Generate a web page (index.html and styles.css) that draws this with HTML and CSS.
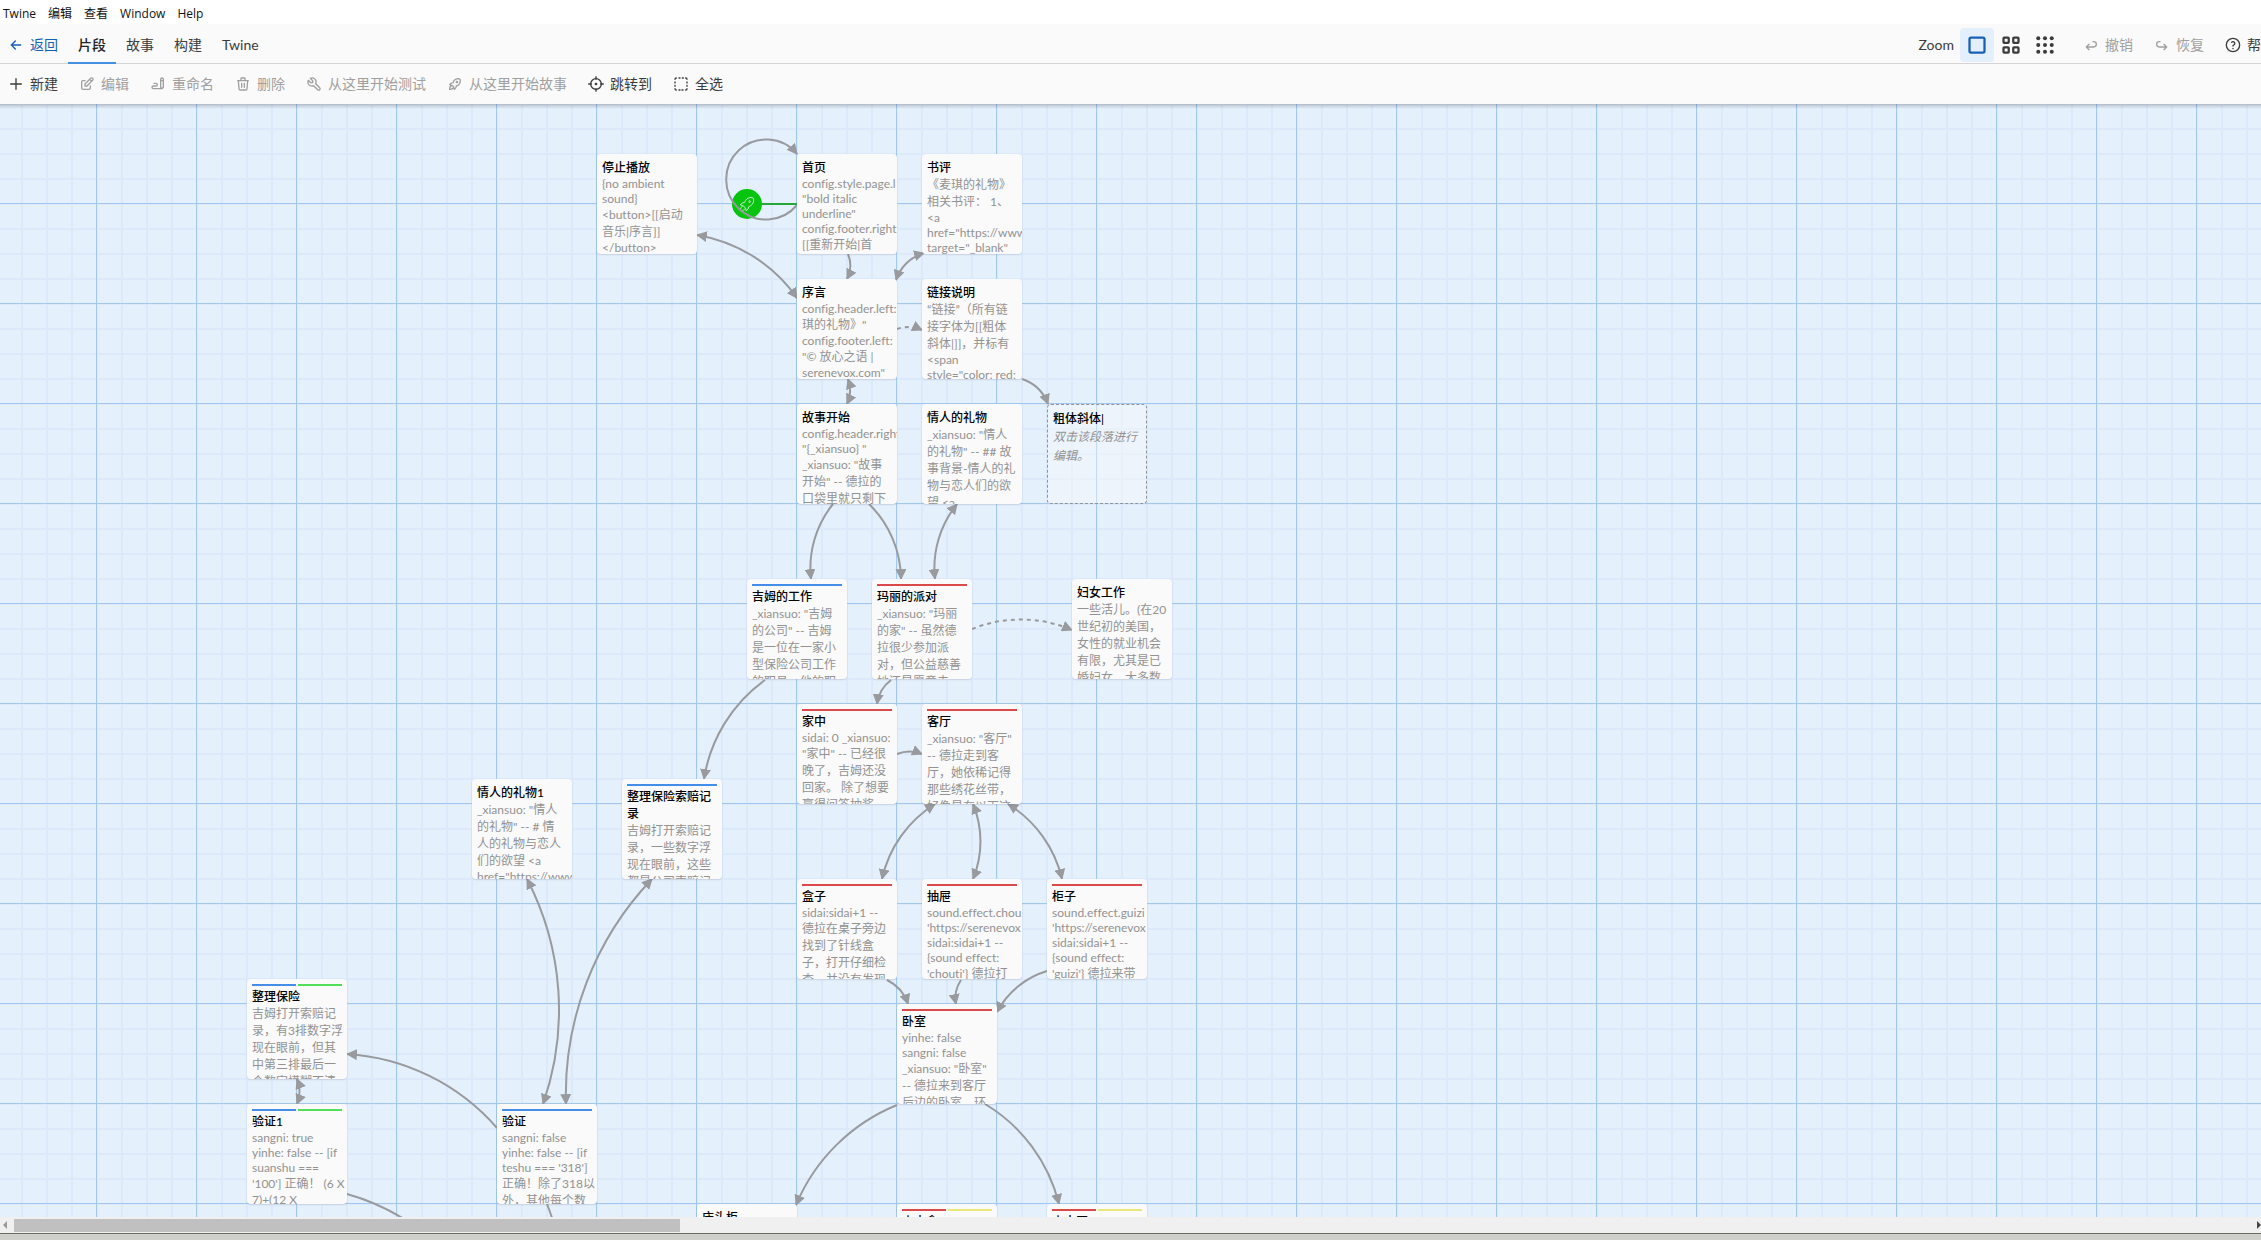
FILE: index.html
```
<!DOCTYPE html>
<html lang="zh-CN">
<head>
<meta charset="utf-8">
<title>Twine</title>
<link rel="stylesheet" href="styles.css">
</head>
<body>
<nav class="menubar" aria-label="Menu">
  <button>Twine</button><button>编辑</button><button>查看</button><button>Window</button><button>Help</button>
</nav>
<header class="top">
  <div class="tabs">
    <a class="tab back" href="#"><svg class="icon" viewBox="0 0 24 24"><path d="M5 12h14M5 12l6 6M5 12l6-6"/></svg>返回</a>
    <button class="tab active">片段</button>
    <button class="tab">故事</button>
    <button class="tab">构建</button>
    <button class="tab">Twine</button>
  </div>
  <div class="view">
    <span class="zoom-label">Zoom</span>
    <button class="zoom on" aria-label="Large"><svg viewBox="0 0 24 24"><rect x="2" y="2" width="20" height="20" rx="2"/></svg></button>
    <button class="zoom" aria-label="Medium"><svg viewBox="0 0 24 24"><rect x="2" y="2" width="7" height="7" rx="1"/><rect x="15" y="2" width="7" height="7" rx="1"/><rect x="2" y="15" width="7" height="7" rx="1"/><rect x="15" y="15" width="7" height="7" rx="1"/></svg></button>
    <button class="zoom dots" aria-label="Small"><svg viewBox="0 0 24 24"><circle cx="3" cy="3" r="2.7"/><circle cx="12" cy="3" r="2.7"/><circle cx="21" cy="3" r="2.7"/><circle cx="3" cy="12" r="2.7"/><circle cx="12" cy="12" r="2.7"/><circle cx="21" cy="12" r="2.7"/><circle cx="3" cy="21" r="2.7"/><circle cx="12" cy="21" r="2.7"/><circle cx="21" cy="21" r="2.7"/></svg></button>
    <div class="history">
      <button class="tool" disabled><svg class="icon" viewBox="0 0 24 24"><path d="M9 11l-4 4l4 4m-4-4h11a4 4 0 0 0 0-8h-1"/></svg>撤销</button>
      <button class="tool" disabled><svg class="icon" viewBox="0 0 24 24"><path d="M15 11l4 4l-4 4m4-4h-11a4 4 0 0 1 0-8h1"/></svg>恢复</button>
      <button class="tool"><svg class="icon" viewBox="0 0 24 24"><circle cx="12" cy="12" r="10"/><path d="M12 17v.5M12 13.5a1.5 1.5 0 0 1 1-1.500a2.600 2.600 0 1 0-3-4"/></svg>帮助</button>
    </div>
  </div>
</header>
<div class="toolbar">
  <button class="tool"><svg class="icon" viewBox="0 0 24 24"><path d="M12 4v16M4 12h16"/></svg>新建</button>
  <button class="tool" disabled><svg class="icon" viewBox="0 0 24 24"><path d="M9 7h-3a2 2 0 0 0-2 2v9a2 2 0 0 0 2 2h9a2 2 0 0 0 2-2v-3M9 15h3l8.500-8.500a1.500 1.500 0 0 0-3-3l-8.500 8.500v3M16 5l3 3"/></svg>编辑</button>
  <button class="tool" disabled><svg class="icon" viewBox="0 0 24 24"><path d="M20 17v-12a2 2 0 0 0-4 0v12l2 2l2-2zM16 7h4M18 19h-13a2 2 0 1 1 0-4h4a2 2 0 1 0 0-4h-3"/></svg>重命名</button>
  <button class="tool" disabled><svg class="icon" viewBox="0 0 24 24"><path d="M4 7h16M10 11v6M14 11v6M5 7l1 12a2 2 0 0 0 2 2h8a2 2 0 0 0 2-2l1-12M9 7v-3a1 1 0 0 1 1-1h4a1 1 0 0 1 1 1v3"/></svg>删除</button>
  <button class="tool" disabled><svg class="icon" viewBox="0 0 24 24"><path d="M7 10h3v-3l-3.500-3.500a6 6 0 0 1 8 8l6 6a2 2 0 0 1-3 3l-6-6a6 6 0 0 1-8-8l3.500 3.500"/></svg>从这里开始测试</button>
  <button class="tool" disabled><svg class="icon" viewBox="0 0 24 24"><path d="M4 13a8 8 0 0 1 7 7a6 6 0 0 0 3-5a9 9 0 0 0 6-8a3 3 0 0 0-3-3a9 9 0 0 0-8 6a6 6 0 0 0-5 3M7 14a6 6 0 0 0-3 6a6 6 0 0 0 6-3"/><circle cx="15" cy="9" r="1"/></svg>从这里开始故事</button>
  <button class="tool"><svg class="icon" viewBox="0 0 24 24"><circle cx="12" cy="12" r="8"/><circle cx="12" cy="12" r="1"/><path d="M12 1v4M1 12h4M12 19v4M19 12h4"/></svg>跳转到</button>
  <button class="tool"><svg class="icon" viewBox="0 0 24 24"><path d="M3 5a2 2 0 0 1 2-2M9 3h1.500M14 3h1.500M19 3a2 2 0 0 1 2 2M21 9v1.500M21 14v1.500M21 19a2 2 0 0 1-2 2M15 21h-1.500M10.500 21h-1.500M5 21a2 2 0 0 1-2-2M3 15.500v-1.500M3 10.500v-1.500"/></svg>全选</button>
</div>

<main class="map">
  <svg class="links" aria-hidden="true">
    <defs><marker id="arrow" viewBox="0 0 10 10" markerUnits="userSpaceOnUse" markerWidth="11" markerHeight="11" refX="9" refY="5" orient="auto-start-reverse"><path d="M0 0v10l10-5z"/></marker></defs>
    <g transform="translate(0 -104)">
      <path class="start-line" d="M747 204H797"/>
      <circle class="start" cx="747" cy="204" r="15"/>
      <g class="rocket" transform="translate(737 194) scale(.84)"><path d="M4 13a8 8 0 0 1 7 7a6 6 0 0 0 3-5a9 9 0 0 0 6-8a3 3 0 0 0-3-3a9 9 0 0 0-8 6a6 6 0 0 0-5 3M7 14a6 6 0 0 0-3 6a6 6 0 0 0 6-3"/><circle cx="15" cy="9" r="1"/></g>
      <g class="one">
        <path d="M797 205A40 40 0 1 1 797 154"/>
        <path d="M848 254A30 30 0 0 1 847 279"/>
        <path d="M1022 379A42 42 0 0 1 1048 404"/>
        <path d="M833 504A102 102 0 0 0 811 579"/>
        <path d="M869 504A106 106 0 0 1 901 579"/>
        <path d="M765 680A151 151 0 0 0 704 779"/>
        <path d="M891 680A36 36 0 0 0 877 704"/>
        <path d="M897 754A33 33 0 0 1 922 754"/>
        <path d="M887 980A41 41 0 0 1 908 1004"/>
        <path d="M961 980A32 32 0 0 0 956 1004"/>
        <path d="M1047 971A84 84 0 0 0 997 1012"/>
        <path d="M897 1105A185 185 0 0 0 796 1205"/>
        <path d="M985 1104A162 162 0 0 1 1059 1204"/>
        <path d="M497 1128A217 217 0 0 0 347 1054"/>
        <path class="dash" d="M897 329A33 33 0 0 1 922 330"/>
        <path class="dash" d="M972 629A130 130 0 0 1 1072 630"/>
      </g>
      <g class="both">
        <path d="M697 235A153 153 0 0 1 797 298"/>
        <path d="M924 253A42 42 0 0 0 896 280"/>
        <path d="M848 379A33 33 0 0 1 847 404"/>
        <path d="M957 504A102 102 0 0 0 935 579"/>
        <path d="M935 804A119 119 0 0 0 882 879"/>
        <path d="M973 804A98 98 0 0 1 973 879"/>
        <path d="M1008 804A120 120 0 0 1 1062 879"/>
        <path d="M527 879A284 284 0 0 1 543 1104"/>
        <path d="M652 879A312 312 0 0 0 566 1104"/>
        <path d="M297 1079A33 33 0 0 1 297 1104"/>
      </g>
      <path d="M347 1194A220 220 0 0 1 420 1230"/>
      <path d="M547 1204A220 220 0 0 1 556 1232"/>
    </g>
  </svg>

  <article class="card" style="left:597px;top:50px"><h2>停止播放</h2><p><span>{no ambient</span><span>sound}</span><span class="cjk">&lt;button&gt;[[启动</span><span class="cjk">音乐|序言]]</span><span>&lt;/button&gt;</span></p></article>
  <article class="card" style="left:797px;top:50px"><h2>首页</h2><p><span>config.style.page.l</span><span>"bold italic</span><span>underline"</span><span>config.footer.right:</span><span class="cjk">[[重新开始|首</span></p></article>
  <article class="card" style="left:922px;top:50px"><h2>书评</h2><p><span class="cjk">《麦琪的礼物》</span><span class="cjk">相关书评： 1、</span><span>&lt;a</span><span>href="https://www</span><span>target="_blank"</span></p></article>
  <article class="card" style="left:797px;top:175px"><h2>序言</h2><p><span>config.header.left:</span><span class="cjk">琪的礼物》"</span><span>config.footer.left:</span><span class="cjk">"© 放心之语 |</span><span>serenevox.com"</span></p></article>
  <article class="card" style="left:922px;top:175px"><h2>链接说明</h2><p><span class="cjk">“链接”（所有链</span><span class="cjk">接字体为[[粗体</span><span class="cjk">斜体|]]，并标有</span><span>&lt;span</span><span>style="color: red;</span></p></article>
  <article class="card" style="left:797px;top:300px"><h2>故事开始</h2><p><span>config.header.right</span><span>"{_xiansuo} "</span><span class="cjk">_xiansuo: "故事</span><span class="cjk">开始" -- 德拉的</span><span class="cjk">口袋里就只剩下</span></p></article>
  <article class="card" style="left:922px;top:300px"><h2>情人的礼物</h2><p><span class="cjk">_xiansuo: "情人</span><span class="cjk">的礼物" -- ## 故</span><span class="cjk">事背景-情人的礼</span><span class="cjk">物与恋人们的欲</span><span class="cjk">望 &lt;a</span></p></article>
  <article class="card empty" style="left:1047px;top:300px"><h2>粗体斜体|</h2><p><span>双击该段落进行</span><span>编辑。</span></p></article>
  <article class="card" style="left:747px;top:475px"><div class="tags"><i class="blue"></i></div><h2>吉姆的工作</h2><p><span class="cjk">_xiansuo: "吉姆</span><span class="cjk">的公司" -- 吉姆</span><span class="cjk">是一位在一家小</span><span class="cjk">型保险公司工作</span><span class="cjk">的职员，他的职</span></p></article>
  <article class="card" style="left:872px;top:475px"><div class="tags"><i class="red"></i></div><h2>玛丽的派对</h2><p><span class="cjk">_xiansuo: "玛丽</span><span class="cjk">的家" -- 虽然德</span><span class="cjk">拉很少参加派</span><span class="cjk">对，但公益慈善</span><span class="cjk">她还是愿意去</span></p></article>
  <article class="card" style="left:1072px;top:475px"><h2>妇女工作</h2><p><span class="cjk">一些活儿。(在20</span><span class="cjk">世纪初的美国，</span><span class="cjk">女性的就业机会</span><span class="cjk">有限，尤其是已</span><span class="cjk">婚妇女。大多数</span></p></article>
  <article class="card" style="left:797px;top:600px"><div class="tags"><i class="red"></i></div><h2>家中</h2><p><span>sidai: 0 _xiansuo:</span><span class="cjk">"家中" -- 已经很</span><span class="cjk">晚了，吉姆还没</span><span class="cjk">回家。 除了想要</span><span class="cjk">赢得问答抽奖</span></p></article>
  <article class="card" style="left:922px;top:600px"><div class="tags"><i class="red"></i></div><h2>客厅</h2><p><span class="cjk">_xiansuo: "客厅"</span><span class="cjk">-- 德拉走到客</span><span class="cjk">厅，她依稀记得</span><span class="cjk">那些绣花丝带，</span><span class="cjk">好像是在以下这</span></p></article>
  <article class="card" style="left:472px;top:675px"><h2>情人的礼物1</h2><p><span class="cjk">_xiansuo: "情人</span><span class="cjk">的礼物" -- # 情</span><span class="cjk">人的礼物与恋人</span><span class="cjk">们的欲望 &lt;a</span><span>href="https://www</span></p></article>
  <article class="card" style="left:622px;top:675px"><div class="tags"><i class="blue"></i></div><h2>整理保险索赔记录</h2><p><span class="cjk">吉姆打开索赔记</span><span class="cjk">录，一些数字浮</span><span class="cjk">现在眼前，这些</span><span class="cjk">都是公司索赔记</span></p></article>
  <article class="card" style="left:797px;top:775px"><div class="tags"><i class="red"></i></div><h2>盒子</h2><p><span>sidai:sidai+1 --</span><span class="cjk">德拉在桌子旁边</span><span class="cjk">找到了针线盒</span><span class="cjk">子，打开仔细检</span><span class="cjk">查，并没有发现</span></p></article>
  <article class="card" style="left:922px;top:775px"><div class="tags"><i class="red"></i></div><h2>抽屉</h2><p><span>sound.effect.chou</span><span>'https://serenevox</span><span>sidai:sidai+1 --</span><span>{sound effect:</span><span class="cjk">'chouti'} 德拉打</span></p></article>
  <article class="card" style="left:1047px;top:775px"><div class="tags"><i class="red"></i></div><h2>柜子</h2><p><span>sound.effect.guizi</span><span>'https://serenevox</span><span>sidai:sidai+1 --</span><span>{sound effect:</span><span class="cjk">'guizi'} 德拉来带</span></p></article>
  <article class="card" style="left:247px;top:875px"><div class="tags"><i class="blue"></i><i class="green"></i></div><h2>整理保险</h2><p><span class="cjk">吉姆打开索赔记</span><span class="cjk">录，有3排数字浮</span><span class="cjk">现在眼前，但其</span><span class="cjk">中第三排最后一</span><span class="cjk">个数字模糊不清</span></p></article>
  <article class="card" style="left:897px;top:900px"><div class="tags"><i class="red"></i></div><h2>卧室</h2><p><span>yinhe: false</span><span>sangni: false</span><span class="cjk">_xiansuo: "卧室"</span><span class="cjk">-- 德拉来到客厅</span><span class="cjk">后边的卧室，环</span></p></article>
  <article class="card" style="left:247px;top:1000px"><div class="tags"><i class="blue"></i><i class="green"></i></div><h2>验证1</h2><p><span>sangni: true</span><span>yinhe: false -- [if</span><span>suanshu ===</span><span class="cjk">'100'] 正确！ (6 X</span><span>7)+(12 X</span></p></article>
  <article class="card" style="left:497px;top:1000px"><div class="tags"><i class="blue"></i></div><h2>验证</h2><p><span>sangni: false</span><span>yinhe: false -- [if</span><span>teshu === '318']</span><span class="cjk">正确！除了318以</span><span class="cjk">外，其他每个数</span></p></article>
  <article class="card" style="left:697px;top:1100px"><h2>床头柜</h2></article>
  <article class="card" style="left:897px;top:1100px"><div class="tags"><i class="red"></i><i class="yellow"></i></div><h2>小木盒</h2></article>
  <article class="card" style="left:1047px;top:1100px"><div class="tags"><i class="red"></i><i class="yellow"></i></div><h2>小木匣</h2></article>
</main>
<div class="scrollbar">
  <svg viewBox="0 0 14 16"><path d="M7 4v8l-4-4z"/></svg>
  <div class="track"><div class="thumb"></div></div>
  <svg class="right" viewBox="0 0 4 16"><path d="M0 4v8l4-4z"/></svg>
</div>
<footer class="frame"></footer>
</body>
</html>
```
FILE: styles.css
```
* { box-sizing: border-box; }
body {
  margin: 0;
  height: 100vh;
  display: flex;
  flex-direction: column;
  overflow: hidden;
  background: #fafafa;
  color: #3c3c3c;
  font: 14px/20px Lato, "Noto Sans CJK SC", sans-serif;
  font-variant-ligatures: none;
  text-spacing-trim: space-all;
}
button, a {
  font: inherit;
  color: inherit;
  border: 0;
  padding: 0;
  background: none;
  text-decoration: none;
  white-space: nowrap;
}

.menubar {
  flex: none;
  display: flex;
  gap: 12px;
  height: 24px;
  padding: 4px 3px 0;
  background: #fff;
  color: #111;
  font-family: "Open Sans", "Noto Sans CJK SC", sans-serif;
  font-size: 12px;
}

.top {
  flex: none;
  display: flex;
  justify-content: space-between;
  height: 40px;
  margin-right: -22px;
  border-bottom: 1px solid #d4d4d4;
}
.tabs { display: flex; }
.tab {
  display: flex;
  align-items: center;
  gap: 6px;
  padding: 4px 10px 0;
  height: 40px;
  border-bottom: 2px solid transparent;
}
.tab.back { padding-left: 8px; color: #1560b3; }
.tab.active { border-color: #4390e0; color: #222; font-weight: 500; }
.icon {
  width: 16px;
  height: 16px;
  fill: none;
  stroke: currentColor;
  stroke-width: 2;
  stroke-linecap: round;
  stroke-linejoin: round;
}

.view { display: flex; align-items: center; padding-top: 2px; }
.zoom-label { margin-right: 6px; }
.zoom { width: 34px; height: 34px; border-radius: 4px; padding: 8px; }
.zoom.on { background: #e4effc; color: #1560b3; }
.zoom svg {
  display: block;
  width: 18px;
  height: 18px;
  fill: none;
  stroke: currentColor;
  stroke-width: 3;
  overflow: visible;
}
.zoom.dots svg { fill: currentColor; stroke: none; }
.history { display: flex; gap: 5px; margin-left: 13px; }

.toolbar {
  flex: none;
  display: flex;
  gap: 5px;
  height: 40px;
}
.tool {
  display: flex;
  align-items: center;
  gap: 6px;
  padding: 0 8px;
}
.tool:disabled { color: #a0a0a0; }

.map {
  flex: 1;
  min-height: 0;
  position: relative;
  overflow: hidden;
  background-color: #e5f0fd;
  background-image:
    linear-gradient(#0003, #0000),
    linear-gradient(90deg, #a2c8ee 1px, transparent 1px),
    linear-gradient(#a2c8ee 1px, transparent 1px),
    linear-gradient(90deg, #dce9fb 2px, transparent 2px),
    linear-gradient(#dce9fb 2px, transparent 2px);
  background-size: 100% 5px, 100px 100px, 100px 100px, 25px 25px, 25px 25px;
  background-position: 0 0, 96px 0, 0 99px, 21px 0, 0 24px;
  background-repeat: no-repeat, repeat, repeat, repeat, repeat;
}
.links {
  position: absolute;
  inset: 0;
  width: 100%;
  height: 100%;
  fill: none;
  stroke: #989a9d;
  stroke-width: 2;
}
.links marker path { fill: #989a9d; stroke: none; }
.one path { marker-end: url(#arrow); }
.both path { marker-start: url(#arrow); marker-end: url(#arrow); }
.dash { stroke-dasharray: 4 4; }
.start { fill: #07c40e; stroke: none; }
.start-line { stroke: #25a838; }
.rocket { stroke: #d9f7dc; stroke-width: 1; }

.card {
  position: absolute;
  width: 100px;
  height: 100px;
  padding: 5px;
  overflow: hidden;
  border-radius: 4px;
  background: #fafafa;
  box-shadow: 0 1px 2px #0000001a;
  font-size: 12px;
  line-height: 17px;
}
.card h2 { margin: 0; font-size: 12px; font-weight: 500; color: #000; }
.card p { margin: 0; color: #929292; }
.card span { display: block; height: 15px; line-height: 15px; white-space: nowrap; }
.card .cjk { height: 17px; line-height: 17px; }
.card.empty {
  background: #fafafa66;
  border: 1px dashed #8e949b;
  box-shadow: none;
}
.card.empty p { font-style: italic; }
.card.empty span { height: 19px; line-height: 19px; }
.tags { display: flex; gap: 2px; margin-bottom: 2px; }
.tags i { flex: 1; height: 2px; }
.blue { background: #448de8; }
.red { background: #da4a4a; }
.green { background: #50df58; }
.yellow { background: #e8e878; }

.scrollbar {
  flex: none;
  display: flex;
  height: 16px;
  background: #f0f0f0;
}
.scrollbar svg { width: 14px; height: 16px; fill: #9a9a9a; }
.scrollbar .right { width: 4px; fill: #444; }
.track { flex: 1; padding: 2px 0 1px; }
.thumb { width: 29.7%; height: 13px; background: #c0c0c0; }
.frame {
  flex: none;
  height: 7px;
  border-top: 1px solid #6a6c66;
  background: #cfd0cc;
}
```
